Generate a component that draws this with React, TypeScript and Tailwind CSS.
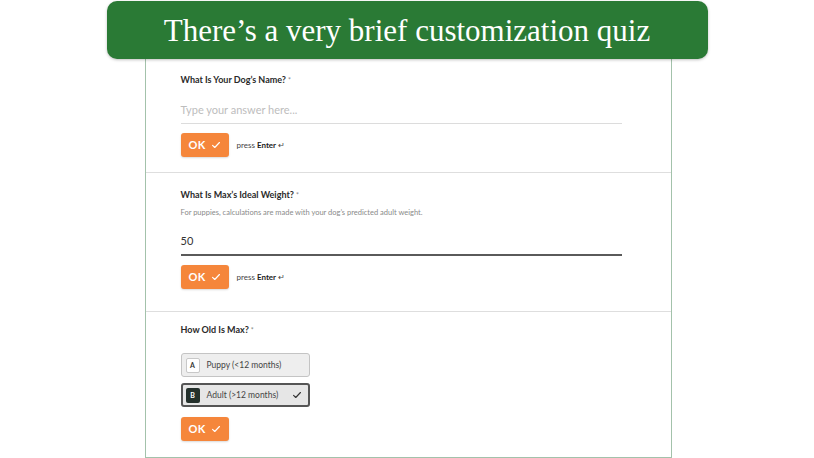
import React from "react";

const Check = ({ className = "" }: { className?: string }) => (
  <svg viewBox="0 0 16 16" className={className} fill="none" stroke="currentColor" strokeWidth="1.8" strokeLinecap="round" strokeLinejoin="round">
    <path d="M2.5 8.5 L6 12 L13.5 4" />
  </svg>
);

const OkButton = () => (
  <button className="flex items-center justify-center gap-[5px] w-[48px] h-[24px] rounded-[3px] bg-[#f5863b] text-white shadow-[0_1px_2px_rgba(0,0,0,0.15)]">
    <span className="text-[11px] font-bold tracking-[0.3px]">OK</span>
    <Check className="w-[10px] h-[10px]" />
  </button>
);

const PressEnter = () => (
  <span className="ml-[8px] text-[8px] text-[#444]">
    press <span className="font-bold text-[#222]">Enter</span> ↵
  </span>
);

const Label = ({ children }: { children: React.ReactNode }) => (
  <div className="h-[12px] leading-[12px] text-[9px] font-bold text-[#2a2a2a]">
    {children}
    <span className="font-normal text-[#888] text-[7px] align-top ml-[2px]">*</span>
  </div>
);

export default function App() {
  return (
    <div className="w-[814px] h-[458px] bg-white overflow-hidden flex flex-col items-center" style={{ fontFamily: "Lato, 'Noto Sans', sans-serif" }}>
      <div className="relative z-10 mt-[1px] w-[601px] h-[58px] rounded-[10px] bg-[#2a7a35] flex items-center justify-center shadow-[0_1px_3px_rgba(0,0,0,0.25)]">
        <span className="text-white text-[31px] leading-none" style={{ fontFamily: "'Liberation Serif', 'DejaVu Serif', serif" }}>
          There’s a very brief customization quiz
        </span>
      </div>
      <div className="-mt-[1px] ml-[2px] w-[527px] flex-1 border-x border-b border-[#a3c2ab] bg-white">
        {/* Section 1 */}
        <div className="h-[114px] pl-[35px] pt-[16px]">
          <Label>What Is Your Dog’s Name?</Label>
          <div className="mt-[12px] w-[441px] h-[26px] border-b border-[#dcdcdc] flex items-center text-[11px] text-[#bdbdbd]">
            Type your answer here...
          </div>
          <div className="mt-[9px] flex items-center">
            <OkButton />
            <PressEnter />
          </div>
        </div>
        {/* Section 2 */}
        <div className="h-[139px] pl-[35px] pt-[16px] border-t border-[#dedede]">
          <Label>What Is Max’s Ideal Weight?</Label>
          <div className="mt-[7px] h-[10px] leading-[10px] text-[7.5px] text-[#8a8a8a]">
            For puppies, calculations are made with your dog’s predicted adult weight.
          </div>
          <div className="mt-[10px] w-[441px] h-[28px] border-b-2 border-[#5a5a5a] flex items-center text-[11px] text-[#333]">
            50
          </div>
          <div className="mt-[9px] flex items-center">
            <OkButton />
            <PressEnter />
          </div>
        </div>
        {/* Section 3 */}
        <div className="pl-[35px] pt-[12px] border-t border-[#dedede]">
          <Label>How Old Is Max?</Label>
          <div className="mt-[17px] w-[129px] h-[24px] rounded-[3px] border border-[#c4c4c4] bg-[#eeeeee] flex items-center pl-[4px]">
            <span className="w-[14px] h-[15px] flex items-center justify-center bg-white border border-[#c8c8c8] rounded-[2px] text-[7px] font-bold text-[#333]">A</span>
            <span className="ml-[7px] text-[8.5px] text-[#444]">Puppy (&lt;12 months)</span>
          </div>
          <div className="mt-[6px] w-[129px] h-[24px] rounded-[3px] border-2 border-[#555] bg-[#e6e6e6] flex items-center pl-[3px] pr-[6px]">
            <span className="w-[14px] h-[15px] flex items-center justify-center bg-[#24302b] rounded-[2px] text-[7px] font-bold text-white">B</span>
            <span className="ml-[7px] text-[8.5px] text-[#444]">Adult (&gt;12 months)</span>
            <Check className="ml-auto w-[10px] h-[10px] text-[#333]" />
          </div>
          <div className="mt-[10px] flex items-center">
            <OkButton />
          </div>
        </div>
      </div>
    </div>
  );
}
